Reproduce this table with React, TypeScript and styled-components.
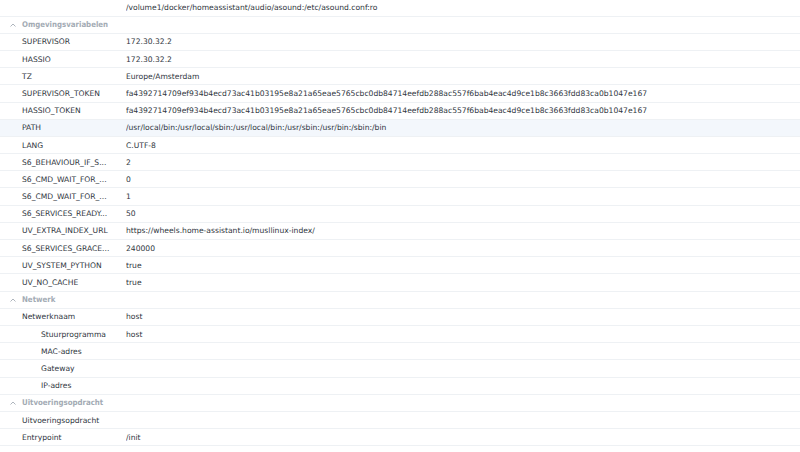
import React from "react";
import styled, { createGlobalStyle } from "styled-components";

const Global = createGlobalStyle`
  html, body { margin: 0; padding: 0; background: #ffffff; }
  body { font-family: "DejaVu Sans", Verdana, sans-serif; overflow: hidden; }
`;

const List = styled.div`
  width: 800px;
  margin-top: -0.6px;
  display: flex;
  flex-direction: column;
`;

const Row = styled.div<{ $active?: boolean }>`
  box-sizing: border-box;
  height: 17.2px;
  display: grid;
  grid-template-columns: 126px 1fr;
  align-items: center;
  border-bottom: 1px solid #eef1f4;
  background: ${(p) => (p.$active ? "#f3f7fc" : "#ffffff")};
  font-size: 7.6px;
  color: #2f363e;
  white-space: nowrap;
`;

const Key = styled.div<{ $indent?: boolean }>`
  padding-left: ${(p) => (p.$indent ? "41px" : "22px")};
  overflow: hidden;
  text-overflow: ellipsis;
  padding-right: 4px;
`;

const Value = styled.div`
  overflow: hidden;
`;

const Header = styled.div`
  box-sizing: border-box;
  height: 17.2px;
  display: flex;
  align-items: center;
  gap: 5px;
  padding-left: 9px;
  border-bottom: 1px solid #eef1f4;
  font-family: "DejaVu Sans Condensed", "DejaVu Sans", sans-serif;
  font-size: 7.8px;
  font-weight: bold;
  color: #a3abb4;
`;

const Chevron = () => (
  <svg width="8" height="8" viewBox="0 0 8 8">
    <path d="M1.5 5.5 L4 3 L6.5 5.5" fill="none" stroke="#a5adb6" strokeWidth="0.9" />
  </svg>
);

type Item = { k: string; v?: string; indent?: boolean; active?: boolean } | { h: string };

const token =
  "fa4392714709ef934b4ecd73ac41b03195e8a21a65eae5765cbc0db84714eefdb288ac557f6bab4eac4d9ce1b8c3663fdd83ca0b1047e167";

const items: Item[] = [
  { k: "", v: "/volume1/docker/homeassistant/audio/asound:/etc/asound.conf:ro" },
  { h: "Omgevingsvariabelen" },
  { k: "SUPERVISOR", v: "172.30.32.2" },
  { k: "HASSIO", v: "172.30.32.2" },
  { k: "TZ", v: "Europe/Amsterdam" },
  { k: "SUPERVISOR_TOKEN", v: token },
  { k: "HASSIO_TOKEN", v: token },
  { k: "PATH", v: "/usr/local/bin:/usr/local/sbin:/usr/local/bin:/usr/sbin:/usr/bin:/sbin:/bin", active: true },
  { k: "LANG", v: "C.UTF-8" },
  { k: "S6_BEHAVIOUR_IF_S...", v: "2" },
  { k: "S6_CMD_WAIT_FOR_...", v: "0" },
  { k: "S6_CMD_WAIT_FOR_...", v: "1" },
  { k: "S6_SERVICES_READY...", v: "50" },
  { k: "UV_EXTRA_INDEX_URL", v: "https://wheels.home-assistant.io/musllinux-index/" },
  { k: "S6_SERVICES_GRACE...", v: "240000" },
  { k: "UV_SYSTEM_PYTHON", v: "true" },
  { k: "UV_NO_CACHE", v: "true" },
  { h: "Netwerk" },
  { k: "Netwerknaam", v: "host" },
  { k: "Stuurprogramma", v: "host", indent: true },
  { k: "MAC-adres", v: "", indent: true },
  { k: "Gateway", v: "", indent: true },
  { k: "IP-adres", v: "", indent: true },
  { h: "Uitvoeringsopdracht" },
  { k: "Uitvoeringsopdracht", v: "" },
  { k: "Entrypoint", v: "/init" },
];

export default function App() {
  return (
    <>
      <Global />
      <List>
        {items.map((it, i) =>
          "h" in it ? (
            <Header key={i}>
              <Chevron />
              {it.h}
            </Header>
          ) : (
            <Row key={i} $active={it.active}>
              <Key $indent={it.indent}>{it.k}</Key>
              <Value>{it.v}</Value>
            </Row>
          )
        )}
      </List>
    </>
  );
}
